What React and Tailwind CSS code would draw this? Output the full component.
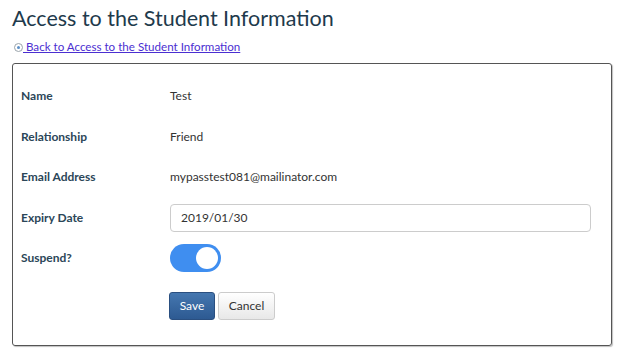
export default function App() {
  const rows = [
    { label: "Name", value: "Test" },
    { label: "Relationship", value: "Friend" },
    { label: "Email Address", value: "mypasstest081@mailinator.com" },
  ];
  return (
    <div className="w-[624px] h-[352px] bg-white overflow-hidden" style={{ fontFamily: "Lato, 'Open Sans', sans-serif" }}>
      <div className="pl-[12px] pt-[4px]">
        <h1 className="text-[21.5px] leading-[28px] text-[#1e3a4c] font-normal">Access to the Student Information</h1>
        <div className="flex items-center mt-[8px] ml-[2px] h-[14px]">
          <span className="w-[9px] h-[9px] rounded-full border border-[#9aa4ab] flex items-center justify-center">
            <span className="w-[3px] h-[3px] rounded-full bg-[#5b8fc7]"></span>
          </span>
          <a href="#" className="text-[11.6px] leading-[14px] text-[#4b2fd1] underline whitespace-pre">{" Back to Access to the Student Information"}</a>
        </div>
      </div>
      <div className="mx-[12px] mt-[9px] h-[283px] border border-[#555] rounded-[3px] shadow-[1px_1px_1px_rgba(0,0,0,0.25)] pl-[8px] pr-[20px] pt-[12px]">
        {rows.map((r) => (
          <div key={r.label} className="flex items-center h-[40.5px] text-[12px]">
            <div className="w-[149px] font-bold text-[#2b4658]">{r.label}</div>
            <div className="text-[#333]">{r.value}</div>
          </div>
        ))}
        <div className="flex items-center h-[40.5px] text-[12px]">
          <div className="w-[149px] font-bold text-[#2b4658]">Expiry Date</div>
          <div className="flex-1 h-[28px] border border-[#ccc] rounded-[4px] flex items-center pl-[10px] text-[#333] text-[12px]">2019/01/30</div>
        </div>
        <div className="flex items-center h-[40.5px] text-[12px]">
          <div className="w-[149px] font-bold text-[#2b4658]">Suspend?</div>
          <div className="w-[51px] h-[28px] rounded-full bg-[#3f8ef0] flex items-center justify-end pr-[3px]">
            <div className="w-[22px] h-[22px] rounded-full bg-white"></div>
          </div>
        </div>
        <div className="flex items-center pl-[148px] mt-[13px] gap-[3px]">
          <button className="w-[46px] h-[28px] rounded-[3px] border border-[#2a4f80] bg-gradient-to-b from-[#4577b0] to-[#2d5a92] text-white text-[12px]">Save</button>
          <button className="w-[57px] h-[28px] rounded-[3px] border border-[#ccc] bg-gradient-to-b from-[#fff] to-[#e8e8e8] text-[#333] text-[12px]">Cancel</button>
        </div>
      </div>
    </div>
  );
}
